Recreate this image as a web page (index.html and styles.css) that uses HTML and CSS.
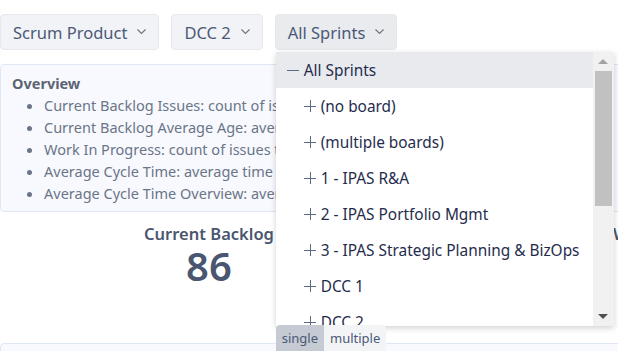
FILE: index.html
```html
<!DOCTYPE html>
<html lang="en">
<head>
    <meta charset="UTF-8">
    <title>Sprint Dashboard</title>
    <link rel="stylesheet" href="styles.css">
</head>
<body>
    <div class="page">
        <div class="toolbar">
            <div class="select">
                <button class="select-btn">Scrum Product <svg class="chev" width="9" height="5" viewBox="0 0 9 5"><polyline points="0.5,0.5 4.5,4.5 8.5,0.5"/></svg></button>
            </div>
            <div class="select">
                <button class="select-btn">DCC 2 <svg class="chev" width="9" height="5" viewBox="0 0 9 5"><polyline points="0.5,0.5 4.5,4.5 8.5,0.5"/></svg></button>
            </div>
            <div class="select">
                <button class="select-btn open">All Sprints <svg class="chev" width="9" height="5" viewBox="0 0 9 5"><polyline points="0.5,0.5 4.5,4.5 8.5,0.5"/></svg></button>

                <div class="dropdown">
                    <div class="options">
                        <div class="option root"><span class="sign minus"></span>All Sprints</div>
                        <div class="option"><span class="sign plus"></span>(no board)</div>
                        <div class="option"><span class="sign plus"></span>(multiple boards)</div>
                        <div class="option"><span class="sign plus"></span>1 - IPAS R&amp;A</div>
                        <div class="option"><span class="sign plus"></span>2 - IPAS Portfolio Mgmt</div>
                        <div class="option"><span class="sign plus"></span>3 - IPAS Strategic Planning &amp; BizOps</div>
                        <div class="option"><span class="sign plus"></span>DCC 1</div>
                        <div class="option"><span class="sign plus"></span>DCC 2</div>
                    </div>
                    <div class="scrollbar">
                        <span class="arrow up"></span>
                        <div class="track"><div class="thumb"></div></div>
                        <span class="arrow down"></span>
                    </div>
                </div>
                <div class="mode">
                    <span class="mode-item active">single</span>
                    <span class="mode-item">multiple</span>
                </div>
            </div>
        </div>

        <div class="overview">
            <div class="overview-title">Overview</div>
            <ul>
                <li>Current Backlog Issues: count of issues in the backlog that are not yet done</li>
                <li>Current Backlog Average Age: average age of issues in the backlog</li>
                <li>Work In Progress: count of issues that are currently in progress</li>
                <li>Average Cycle Time: average time from start of work to done</li>
                <li>Average Cycle Time Overview: average cycle time by issue type</li>
            </ul>
        </div>

        <div class="stats">
            <div class="stat">
                <div class="stat-title">Current Backlog</div>
                <div class="stat-value">86</div>
            </div>
            <div class="stat">
                <div class="stat-title">WIP</div>
                <div class="stat-value">7</div>
            </div>
            <div class="stat">
                <div class="stat-title">Cycle Time</div>
                <div class="stat-value">9.4</div>
            </div>
        </div>

        <div class="panel"></div>
    </div>
</body>
</html>
```

FILE: styles.css
```css
body {
    margin: 0;
    font-family: "Noto Sans", "Open Sans", sans-serif;
    background: #fff;
}
.page {
    width: 618px;
    height: 351px;
    overflow: hidden;
}
.toolbar {
    display: flex;
    gap: 12px;
    padding-top: 14px;
}
.select {
    position: relative;
}
.select-btn {
    display: flex;
    align-items: center;
    gap: 10px;
    height: 36px;
    padding: 0 12px;
    background: #f2f3f6;
    border: 1px solid #e5e7eb;
    border-radius: 4px;
    color: #4b5977;
    font-family: inherit;
    font-size: 16.5px;
}
.select-btn.open {
    background: #e9ebef;
}
.chev {
    fill: none;
    stroke: #6b7280;
    stroke-width: 1.1;
    margin-top: -2px;
}
.dropdown {
    position: absolute;
    top: 38px;
    left: 1px;
    width: 338px;
    height: 274px;
    background: #fff;
    box-shadow: 0 2px 6px rgba(0,0,0,0.18);
    display: flex;
    z-index: 10;
}
.options {
    flex: 1;
    overflow: hidden;
}
.option {
    display: flex;
    align-items: center;
    height: 36px;
    padding-left: 28px;
    color: #1f2c4c;
    font-size: 15.4px;
    white-space: nowrap;
}
.option.root {
    padding-left: 11px;
    background: #e9eaee;
}
.sign {
    position: relative;
    width: 12px;
    height: 12px;
    margin-right: 5px;
}
.sign::before,
.sign.plus::after {
    content: "";
    position: absolute;
    background: #5b6a85;
}
.sign::before {
    left: 0;
    right: 0;
    top: 6px;
    height: 1px;
}
.sign.plus::after {
    top: 0;
    bottom: 0;
    left: 6px;
    width: 1px;
}
.scrollbar {
    width: 21px;
    background: #f1f1f1;
    display: flex;
    flex-direction: column;
    align-items: center;
}
.arrow {
    width: 0;
    height: 0;
    border-left: 5px solid transparent;
    border-right: 5px solid transparent;
    margin: 7px 0;
}
.arrow.up {
    border-bottom: 5px solid #a3a3a3;
}
.arrow.down {
    border-top: 5px solid #505050;
}
.track {
    flex: 1;
    width: 17px;
}
.thumb {
    height: 135px;
    background: #c1c1c1;
}
.mode {
    position: absolute;
    top: 311px;
    left: 1px;
    display: flex;
    font-size: 13px;
    z-index: 11;
}
.mode-item {
    padding: 4px 6px 5px 6px;
    background: #f3f4f6;
    color: #4b5977;
    border-radius: 0 4px 0 0;
}
.mode-item.active {
    background: #c5cad3;
    border-radius: 4px 0 0 0;
}
.overview {
    margin-top: 14px;
    width: 900px;
    height: 148px;
    box-sizing: border-box;
    padding: 7px 11px;
    background: #f7f9fe;
    border: 1px solid #dfe7f6;
    border-radius: 4px;
    color: #6b7587;
    font-size: 14.5px;
}
.overview-title {
    font-weight: bold;
    color: #5c6473;
    line-height: 22px;
}
.overview ul {
    margin: 0;
    padding-left: 32px;
    line-height: 22px;
    white-space: nowrap;
}
.stats {
    display: grid;
    grid-template-columns: 418px 422px 418px;
    padding-top: 10px;
    height: 131px;
    box-sizing: border-box;
}
.stat {
    text-align: center;
    color: #4a5670;
}
.stat-title {
    font-size: 16.5px;
    font-weight: 600;
    line-height: 24px;
}
.stat-value {
    font-size: 40px;
    font-weight: 600;
    line-height: 40px;
}
.panel {
    height: 40px;
    width: 900px;
    background: #f7f9fe;
    border: 1px solid #dfe7f6;
    border-radius: 4px;
}
```
